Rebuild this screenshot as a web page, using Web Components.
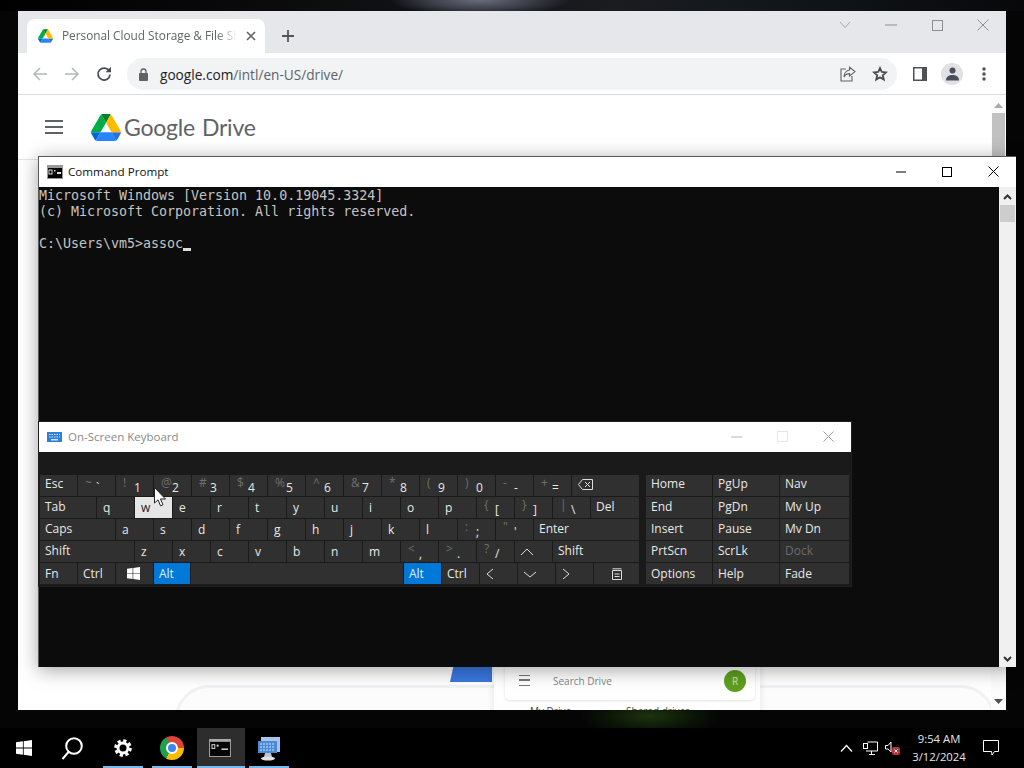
<!DOCTYPE html>
<html>
<head>
<meta charset="utf-8">
<title>Remote desktop</title>
<style>
  html, body { margin: 0; padding: 0; background: #000; overflow: hidden; }
</style>
</head>
<body>
<win-desktop>
  <chrome-window></chrome-window>
  <cmd-window></cmd-window>
  <osk-window></osk-window>
  <mouse-cursor></mouse-cursor>
  <task-bar></task-bar>
</win-desktop>

<script>
const UI_FONT = `"Open Sans", "Noto Sans", sans-serif`;
const DRIVE_LOGO = `
  <svg viewBox="0 0 87.3 78" width="100%" height="100%" style="display:block">
    <path d="m6.6 66.85 3.85 6.65c.8 1.4 1.95 2.5 3.3 3.3l13.75-23.8h-27.5c0 1.55.4 3.1 1.2 4.5z" fill="#0066da"/>
    <path d="m43.65 25-13.75-23.8c-1.35.8-2.5 1.9-3.3 3.3l-25.4 44a9.06 9.06 0 0 0 -1.2 4.5h27.5z" fill="#00ac47"/>
    <path d="m73.55 76.8c1.35-.8 2.5-1.9 3.3-3.3l1.6-2.75 7.65-13.25c.8-1.4 1.2-2.95 1.2-4.5h-27.502l5.852 11.5z" fill="#2a6fdc"/>
    <path d="m43.65 25 13.75-23.8c-1.35-.8-2.9-1.2-4.5-1.2h-18.5c-1.6 0-3.15.45-4.5 1.2z" fill="#00832d"/>
    <path d="m59.8 53h-32.3l-13.75 23.8c1.35.8 2.9 1.2 4.5 1.2h50.8c1.6 0 3.15-.45 4.5-1.2z" fill="#2684fc"/>
    <path d="m73.4 26.5-12.7-22c-.8-1.4-1.95-2.5-3.3-3.3l-13.75 23.8 16.15 28h27.45c0-1.55-.4-3.1-1.2-4.5z" fill="#ffba00"/>
  </svg>`;
const WIN_LOGO = `
  <svg viewBox="0 0 16 16" width="100%" height="100%" fill="#fff" style="display:block">
    <path d="M0 2.3 6.9 1.3V7.6H0zM7.7 1.2 16 0V7.6H7.7zM0 8.4H6.9V14.7L0 13.7zM7.7 8.4H16V16L7.7 14.8z"/>
  </svg>`;

class WinDesktop extends HTMLElement {
  constructor() {
    super();
    this.attachShadow({ mode: 'open' }).innerHTML = `
      <style>
        :host { display: block; position: relative; width: 1024px; height: 768px; overflow: hidden;
          background:
            radial-gradient(ellipse 70px 22px at 650px 716px, #1d3310 0%, #0b1606 60%, transparent 100%),
            radial-gradient(ellipse 90px 16px at 480px 0px, #6a6d7a 0%, #3d3f4a 55%, transparent 100%),
            linear-gradient(90deg, #000 0, #0a0a0c 25%, #1a1c20 60%, #101418 80%, #08080a 100%) 0 0 / 100% 11px no-repeat,
            #050506; }
      </style>
      <slot></slot>`;
  }
}

class ChromeWindow extends HTMLElement {
  constructor() {
    super();
    this.attachShadow({ mode: 'open' }).innerHTML = `
      <style>
        :host { display: flex; flex-direction: column; position: absolute; left: 18px; top: 11px; width: 988px; height: 699px;
          background: #fff; font-family: ${UI_FONT}; }
        .strip { height: 42px; background: #e5e7ea; display: flex; align-items: flex-end; flex: none; }
        .tab { width: 238px; height: 34px; margin-left: 9px; background: #fff; border-radius: 8px 8px 0 0; box-sizing: border-box;
          display: flex; align-items: center; padding: 0 9px 1px 11px; gap: 9px; }
        .fav { width: 15px; height: 14px; flex: none; }
        .tab-title { flex: 1; font-size: 11.8px; color: #5f6368; white-space: nowrap; overflow: hidden; padding-bottom: 1px;
          -webkit-mask-image: linear-gradient(90deg, #000 88%, transparent 100%); mask-image: linear-gradient(90deg, #000 88%, transparent 100%); }
        .newtab { margin: 0 0 9px 15px; width: 16px; height: 16px; }
        .caption { margin-left: auto; align-self: flex-start; display: flex; }
        .caption span { width: 46px; height: 28px; display: flex; align-items: center; justify-content: center; }
        .toolbar { height: 42px; flex: none; display: flex; align-items: center; border-bottom: 1px solid #dadce0; box-sizing: border-box; padding-top: 1px; }
        .nav { width: 32px; height: 20px; display: flex; align-items: center; justify-content: center; flex: none; }
        .nav:first-child { margin-left: 6px; }
        .omni { width: 770px; height: 32px; margin-left: 7px; background: #f1f3f4; border-radius: 16px; display: flex; align-items: center;
          padding: 0 9px 0 11px; box-sizing: border-box; flex: none; }
        .url { margin-left: 11px; font-size: 13.65px; color: #5f6368; }
        .url b { font-weight: 400; color: #202124; }
        .omni-end { margin-left: auto; display: flex; gap: 16px; align-items: center; }
        .tools { display: flex; align-items: center; margin-left: 16px; gap: 13px; }
        .avatar { width: 22px; height: 22px; border-radius: 50%; background: #dfe1e5; display: flex; align-items: center; justify-content: center; margin-left: 1px; }
      </style>
      <div class="strip">
        <div class="tab">
          <span class="fav">${DRIVE_LOGO}</span>
          <span class="tab-title">Personal Cloud Storage &amp; File Sh</span>
          <svg width="10" height="10" viewBox="0 0 10 10" stroke="#5f6368" stroke-width="1.6"><path d="M1 1 9 9M9 1 1 9"/></svg>
        </div>
        <svg class="newtab" viewBox="0 0 16 16" stroke="#555" stroke-width="1.8"><path d="M8 2V14M2 8H14"/></svg>
        <div class="caption">
          <span><svg width="12" height="8" viewBox="0 0 12 8" fill="none" stroke="#a8a8a8"><path d="M1 1 6 6.5 11 1"/></svg></span>
          <span><svg width="12" height="2" viewBox="0 0 12 2" stroke="#8e8e8e"><path d="M0 1H12"/></svg></span>
          <span><svg width="11" height="11" viewBox="0 0 11 11" fill="none" stroke="#8e8e8e"><rect x=".5" y=".5" width="10" height="10"/></svg></span>
          <span><svg width="12" height="12" viewBox="0 0 12 12" stroke="#8e8e8e"><path d="M.5.5 11.5 11.5M11.5.5 .5 11.5"/></svg></span>
        </div>
      </div>
      <div class="toolbar">
        <span class="nav"><svg width="16" height="14" viewBox="0 0 16 14" fill="none" stroke="#b5b7ba" stroke-width="1.6"><path d="M15 7H2M8 1 2 7 8 13"/></svg></span>
        <span class="nav"><svg width="16" height="14" viewBox="0 0 16 14" fill="none" stroke="#b5b7ba" stroke-width="1.6"><path d="M1 7H14M8 1 14 7 8 13"/></svg></span>
        <span class="nav"><svg width="16" height="16" viewBox="0 0 16 16" fill="none"><path d="M13.3 5.2A6 6 0 1 0 14 8.5" stroke="#4a4c50" stroke-width="1.8"/><path d="M9.5 6.3H15V.8z" fill="#4a4c50"/></svg></span>
        <div class="omni">
          <svg width="11" height="13" viewBox="0 0 11 13"><rect x="1" y="5" width="9" height="8" rx="1" fill="#5f6368"/><path d="M3 5V3.5a2.5 2.5 0 0 1 5 0V5" fill="none" stroke="#5f6368" stroke-width="1.3"/></svg>
          <span class="url"><b>google.com</b>/intl/en-US/drive/</span>
          <span class="omni-end">
            <svg width="16" height="16" viewBox="0 0 16 16" fill="none" stroke="#5f6368" stroke-width="1.1"><path d="M6 3H1V15H12V10"/><path d="M9.5 1.2 15 5.6 9.5 10V7.6C7 7.6 5 8.8 4 11 4 7.4 6.2 4.4 9.5 4z"/></svg>
            <svg width="16" height="16" viewBox="0 0 16 16" fill="none" stroke="#4a4c50" stroke-width="1.8"><path d="M8 2 9.8 6 14 6.4 10.8 9.2 11.8 13.6 8 11.3 4.2 13.6 5.2 9.2 2 6.4 6.2 6z"/></svg>
          </span>
        </div>
        <div class="tools">
          <svg width="14" height="14" viewBox="0 0 14 14"><rect width="14" height="14" fill="#4f5155"/><rect x="1.5" y="1.5" width="7.5" height="11" fill="#fff"/></svg>
          <span class="avatar"><svg width="13" height="14" viewBox="0 0 13 14" fill="#4a4f57"><circle cx="6.5" cy="3.5" r="3"/><path d="M0 13.5C0 9.5 3 8 6.5 8S13 9.5 13 13.5z"/></svg></span>
          <svg width="4" height="14" viewBox="0 0 4 14" fill="#4f5155" style="margin-left:6px"><circle cx="2" cy="2" r="1.7"/><circle cx="2" cy="7" r="1.7"/><circle cx="2" cy="12" r="1.7"/></svg>
        </div>
      </div>
      <drive-page></drive-page>`;
  }
}

class DrivePage extends HTMLElement {
  constructor() {
    super();
    this.attachShadow({ mode: 'open' }).innerHTML = `
      <style>
        :host { display: flex; flex: 1; min-height: 0; position: relative; overflow: hidden; background: #fff; font-family: ${UI_FONT}; }
        .main { flex: 1; position: relative; overflow: hidden; }
        header { height: 64px; border-bottom: 1px solid #e4e4e4; display: flex; align-items: center; padding-left: 27px; box-sizing: content-box; }
        .burger { width: 18px; height: 14px; border-top: 2px solid #5f6368; border-bottom: 2px solid #5f6368; box-sizing: border-box; position: relative; }
        .burger::after { content: ""; position: absolute; left: 0; right: 0; top: 4px; height: 2px; background: #5f6368; }
        .logo { width: 30px; height: 27px; margin-left: 28px; }
        .word { margin-left: 3px; font-size: 23px; color: #5f6368; font-family: Lato, ${UI_FONT}; letter-spacing: -.22px; }
        .word + .word { margin-left: 7px; }
        .scroll { width: 15px; flex: none; background: #fcfcfc; display: flex; flex-direction: column; align-items: center; }
        .up { margin-top: 8px; }
        .thumb { width: 13px; height: 60px; margin-top: 5px; background: #c1c1c1; }
        .down { margin-top: auto; margin-bottom: 6px; }
        .laptop { position: absolute; left: 157px; top: 590px; width: 820px; height: 60px; border: 3px solid #f1f2f3; border-radius: 34px 34px 0 0; box-sizing: border-box; background: #fcfcfc; }
        .phone { position: absolute; left: 476px; top: 560px; width: 266px; height: 70px; background: #fff; box-shadow: 0 0 8px rgba(0,0,0,.1); }
        .blue { position: absolute; left: 432px; top: 560px; width: 42px; height: 27px; background: #3a78e0; clip-path: polygon(14% 0, 100% 0, 100% 100%, 0 100%); }
        .search { position: absolute; left: 487px; top: 560px; width: 250px; height: 45px; box-sizing: border-box; background: #fff; border-radius: 0 0 5px 5px;
          box-shadow: 0 1px 3px rgba(0,0,0,.12); display: flex; align-items: center; padding: 6px 9px 0 14px; font-size: 10px; color: #80868b; }
        .s-burger { width: 11px; height: 9px; border-top: 1.5px solid #777; border-bottom: 1.5px solid #777; margin-right: 23px; position: relative; }
        .s-burger::after { content: ""; position: absolute; left: 0; right: 0; top: 3px; height: 1.5px; background: #777; }
        .r { margin-left: auto; width: 22px; height: 22px; border-radius: 50%; background: #5f9e1f; color: #cfe6b0; display: flex; align-items: center; justify-content: center; font-size: 10px; }
        .tabs { position: absolute; left: 512px; top: 609px; font-size: 10px; color: #444; white-space: nowrap; display: flex; gap: 55px; }
      </style>
      <div class="main">
        <header>
          <span class="burger"></span>
          <span class="logo">${DRIVE_LOGO}</span>
          <span class="word">Google</span><span class="word">Drive</span>
        </header>
        <div class="laptop"></div>
        <div class="blue"></div>
        <div class="phone"></div>
        <div class="search"><span class="s-burger"></span>Search Drive<span class="r">R</span></div>
        <div class="tabs"><span>My Drive</span><span>Shared drives</span></div>
      </div>
      <div class="scroll">
        <svg class="up" width="9" height="5" viewBox="0 0 9 5" fill="#a9a9a9"><path d="M4.5 0 9 5H0z"/></svg>
        <div class="thumb"></div>
        <svg class="down" width="9" height="5" viewBox="0 0 9 5" fill="#505050"><path d="M4.5 5 9 0H0z"/></svg>
      </div>`;
  }
}

class CmdWindow extends HTMLElement {
  constructor() {
    super();
    this.attachShadow({ mode: 'open' }).innerHTML = `
      <style>
        :host { display: flex; flex-direction: column; position: absolute; left: 38px; top: 156px; width: 978px; height: 511px;
          box-sizing: border-box; border: 1px solid #5a5a5a; border-bottom: 0; border-right: 0; background: #fff;
          box-shadow: 0 3px 18px rgba(0,0,0,.36); font-family: ${UI_FONT}; }
        .title { height: 30px; flex: none; display: flex; align-items: center; padding: 0 0 1px 8px; box-sizing: border-box; font-size: 11.65px; color: #111; background: #fff; }
        .title span { margin-left: 5px; }
        .caption { margin-left: auto; display: flex; }
        .caption i { width: 46px; height: 29px; display: flex; align-items: center; justify-content: center; }
        .body { flex: 1; display: flex; min-height: 0; }
        .console { flex: 1; background: #0c0c0c; color: #c4c4c4; font: 13.33px/16px "DejaVu Sans Mono", "Liberation Mono", monospace; white-space: pre; padding-top: 1px; letter-spacing: -.02px; }
        .caret { display: inline-block; width: 8px; height: 3px; background: #ddd; vertical-align: -3px; }
        .scroll { width: 17px; flex: none; background: #f0f0f0; display: flex; flex-direction: column; align-items: center; }
        .up { margin-top: 7px; }
        .thumb { width: 15px; height: 17px; margin-top: 5px; background: #cdcdcd; }
        .down { margin-top: auto; margin-bottom: 5px; }
      </style>
      <div class="title">
        <svg width="16" height="14" viewBox="0 0 16 14"><rect width="16" height="14" fill="#999"/><rect x="1" y="3" width="14" height="10" fill="#000"/><rect x="2" y="5" width="3" height="4" fill="none" stroke="#ddd"/><rect x="7" y="5" width="1.5" height="1.5" fill="#ddd"/><rect x="10" y="7" width="4" height="2" fill="#ddd"/></svg>
        <span>Command Prompt</span>
        <div class="caption">
          <i><svg width="10" height="2" viewBox="0 0 10 2" stroke="#000"><path d="M0 1H10"/></svg></i>
          <i><svg width="10" height="10" viewBox="0 0 10 10" fill="none" stroke="#000"><rect x=".5" y=".5" width="9" height="9"/></svg></i>
          <i><svg width="11" height="11" viewBox="0 0 11 11" stroke="#000"><path d="M.5.5 10.5 10.5M10.5.5 .5 10.5"/></svg></i>
        </div>
      </div>
      <div class="body">
        <div class="console">Microsoft Windows [Version 10.0.19045.3324]
(c) Microsoft Corporation. All rights reserved.

C:\\Users\\vm5&gt;assoc<span class="caret"></span></div>
        <div class="scroll">
          <svg class="up" width="9" height="6" viewBox="0 0 9 6" fill="none" stroke="#333" stroke-width="2"><path d="M1 5 4.5 1.5 8 5"/></svg>
          <div class="thumb"></div>
          <svg class="down" width="9" height="6" viewBox="0 0 9 6" fill="none" stroke="#333" stroke-width="2"><path d="M1 1 4.5 4.5 8 1"/></svg>
        </div>
      </div>`;
  }
}

class OskKey extends HTMLElement {
  constructor() {
    super();
    this.attachShadow({ mode: 'open' }).innerHTML = `
      <style>
        :host { display: flex; align-items: center; box-sizing: border-box; height: 21px; margin-right: 1px; padding-left: 5px;
          background: #303030; color: #e8e8e8; font-size: 12px; position: relative; flex: none; white-space: nowrap; }
        :host([pad]) { padding-left: 6px; }
        :host([hot]) { background: #e6e6e6; color: #222; }
        :host([on]) { background: #0078d7; color: #dff0ff; }
        :host([off]) { color: #6a6a6a; }
        .top { position: absolute; left: 7px; top: -1px; color: #6f6f6f; font-size: 12px; }
        .low { position: absolute; left: 18px; top: 4px; }
      </style>
      <span class="top"></span><span class="low"></span><slot></slot>`;
  }
  connectedCallback() {
    this.shadowRoot.querySelector('.top').textContent = this.getAttribute('top') || '';
    this.shadowRoot.querySelector('.low').textContent = this.getAttribute('low') || '';
    this.style.width = (this.getAttribute('w') - 1) + 'px';
  }
}

// [width, label, shifted, flag] for the main block
const chev = (d) => `<svg width="14" height="12" viewBox="0 0 14 12" fill="none" stroke="#ddd" stroke-width="1"><path d="${d}"/></svg>`;
const KEY_ROWS = [
  [[38,'Esc'],[38,'`','~'],[38,'1','!'],[38,'2','@'],[38,'3','#'],[38,'4','$'],[38,'5','%'],[38,'6','^'],[38,'7','&'],[38,'8','*'],[38,'9','('],[38,'0',')'],[38,'-','-'],[38,'=','+'],
    [68,`<svg width="15" height="11" viewBox="0 0 15 11" fill="none" stroke="#ddd" style="margin:-3px 0 0 1px"><path d="M4.5.5H14.5V10.5H4.5L.5 5.500zM7 3l5 5M12 3 7 8"/></svg>`]],
  [[57,'Tab'],[38,'q',0,'pad'],[38,'w',0,'pad hot'],[38,'e',0,'pad'],[38,'r',0,'pad'],[38,'t',0,'pad'],[38,'y',0,'pad'],[38,'u',0,'pad'],[38,'i',0,'pad'],[38,'o',0,'pad'],[38,'p',0,'pad'],[38,'[','{'],[38,']','}'],[38,'\\','|'],[49,'Del']],
  [[76,'Caps'],[38,'a',0,'pad'],[38,'s',0,'pad'],[38,'d',0,'pad'],[38,'f',0,'pad'],[38,'g',0,'pad'],[38,'h',0,'pad'],[38,'j',0,'pad'],[38,'k',0,'pad'],[38,'l',0,'pad'],[38,';',':'],[38,"'",'"'],[106,'Enter']],
  [[95,'Shift'],[38,'z',0,'pad'],[38,'x',0,'pad'],[38,'c',0,'pad'],[38,'v',0,'pad'],[38,'b',0,'pad'],[38,'n',0,'pad'],[38,'m',0,'pad'],[38,',','<'],[38,'.','>'],[38,'/','?'],[38,chev('M1 9 7 3 13 9')],[87,'Shift']],
  [[38,'Fn'],[38,'Ctrl'],[38,`<span style="display:block;width:13px;height:13px;margin-left:6px">${WIN_LOGO}</span>`],[37,'Alt',0,'on'],[213,''],[38,'Alt',0,'on'],[38,'Ctrl'],
    [38,chev('M8 1 2 6 8 11')],[38,chev('M1 4 7 9 13 4')],[38,chev('M2 1 8 6 2 11')],
    [46,`<svg width="10" height="12" viewBox="0 0 10 12" fill="none" stroke="#ddd" style="margin-left:13px"><path d="M.5 2.500H9.500V11.500H.5zM.5.800H9.500M2.500 6H7.500M2.500 8.500H7.500"/></svg>`]]
];
const NAV_ROWS = [
  ['Home','PgUp','Nav'], ['End','PgDn','Mv Up'], ['Insert','Pause','Mv Dn'], ['PrtScn','ScrLk','Dock'], ['Options','Help','Fade']
];
// word labels sit a little above the middle of the key
const liftFor = (rowIndex) => (rowIndex === 0 ? '4px' : rowIndex < 4 ? '2px' : '0');

class OskWindow extends HTMLElement {
  constructor() {
    super();
    this.attachShadow({ mode: 'open' }).innerHTML = `
      <style>
        :host { display: flex; flex-direction: column; position: absolute; left: 38px; top: 421px; width: 814px; height: 166px; box-sizing: border-box;
          border: 1px solid #202020; background: #1a1a1a; font-family: ${UI_FONT}; }
        .title { height: 30px; flex: none; box-sizing: border-box; padding: 0 0 1px 8px; background: #fff; display: flex; align-items: center; color: #8a8a8a; font-size: 11.500px; }
        .title span { margin-left: 6px; }
        .caption { margin-left: auto; display: flex; margin-right: 0; }
        .caption i { width: 46px; height: 29px; display: flex; align-items: center; justify-content: center; }
        .keys { display: flex; padding: 23px 0 0 1px; gap: 6px; }
        .block { display: flex; flex-direction: column; gap: 1px; }
        .row { display: flex; }
      </style>
      <div class="title">
        <svg width="15" height="10" viewBox="0 0 15 10"><rect width="15" height="10" fill="#2f7fd6"/><path d="M2 2.500H13M2 5H13" stroke="#cfe4fa" stroke-dasharray="1.500 1"/><rect x="4" y="7" width="7" height="1.500" fill="#cfe4fa"/></svg>
        <span>On-Screen Keyboard</span>
        <div class="caption">
          <i><svg width="11" height="2" viewBox="0 0 11 2" stroke="#b5b5b5"><path d="M0 1H11"/></svg></i>
          <i><svg width="11" height="11" viewBox="0 0 11 11" fill="none" stroke="#e6e6e6"><rect x=".5" y=".5" width="10" height="10"/></svg></i>
          <i><svg width="11" height="11" viewBox="0 0 11 11" stroke="#a0a0a0"><path d="M.5.5 10.500 10.500M10.500.5 .5 10.500"/></svg></i>
        </div>
      </div>
      <div class="keys">
        <div class="block" id="main"></div>
        <div class="block" id="nav"></div>
      </div>`;
    const main = this.shadowRoot.getElementById('main');
    KEY_ROWS.forEach((keys, r) => {
      const row = document.createElement('div');
      row.className = 'row';
      keys.forEach(([w, label, top, flags]) => {
        const key = document.createElement('osk-key');
        key.setAttribute('w', w);
        if (top) {
          key.setAttribute('top', top);
          key.setAttribute('low', label);
        } else {
          key.innerHTML = label;
          if (/^[A-Z]/.test(label)) key.style.paddingBottom = liftFor(r);
        }
        (flags || '').split(' ').filter(Boolean).forEach((f) => key.setAttribute(f, ''));
        row.appendChild(key);
      });
      main.appendChild(row);
    });
    const nav = this.shadowRoot.getElementById('nav');
    NAV_ROWS.forEach((labels, r) => {
      const row = document.createElement('div');
      row.className = 'row';
      labels.forEach((label, i) => {
        const key = document.createElement('osk-key');
        key.setAttribute('w', i === 2 ? 70 : 67);
        if (label === 'Dock') key.setAttribute('off', '');
        key.style.paddingBottom = liftFor(r);
        key.textContent = label;
        row.appendChild(key);
      });
      nav.appendChild(row);
    });
  }
}

class MouseCursor extends HTMLElement {
  constructor() {
    super();
    this.attachShadow({ mode: 'open' }).innerHTML = `
      <style>:host { display: block; position: absolute; left: 154px; top: 487px; width: 13px; height: 20px; }</style>
      <svg width="13" height="20" viewBox="0 0 13 20"><path d="M.5.5V16L4 12.800 6.500 18.800 9 17.800 6.500 12H11.500z" fill="#fff" stroke="#222"/></svg>`;
  }
}

class TaskItem extends HTMLElement {
  constructor() {
    super();
    this.attachShadow({ mode: 'open' }).innerHTML = `
      <style>
        :host { display: flex; align-items: center; justify-content: center; width: 48px; height: 40px; position: relative; flex: none; }
        :host([active]) { background: #2d2d2d; }
        :host([running])::after, :host([active])::after { content: ""; position: absolute; bottom: 0; left: 4px; right: 4px; height: 2px; background: #76b9ed; }
        :host([active])::after { left: 0; right: 0; }
      </style>
      <slot></slot>`;
  }
}

class TaskBar extends HTMLElement {
  constructor() {
    super();
    this.attachShadow({ mode: 'open' }).innerHTML = `
      <style>
        :host { display: flex; align-items: center; position: absolute; left: 0; bottom: 0; width: 1024px; height: 40px; background: #000; font-family: ${UI_FONT}; color: #e4e4e4; }
        .tray { margin-left: auto; display: flex; align-items: center; height: 40px; }
        .tray svg { flex: none; }
        .clock { width: 74px; text-align: center; font-size: 11.300px; line-height: 18px; margin-left: 2px; }
        .note { margin: 0 25px 0 7px; }
        .chrome-logo { width: 24px; height: 24px; border-radius: 50%; display: flex; align-items: center; justify-content: center;
          background: conic-gradient(from 0deg, #dd4437 0 90deg, #fbbc05 90deg 210deg, #21a04b 210deg 330deg, #dd4437 330deg); }
        .chrome-logo span { width: 8px; height: 8px; background: #3d85f0; border-radius: 50%; border: 2.500px solid #fff; }
      </style>
      <task-item><span style="display:block;width:16px;height:16px">${WIN_LOGO}</span></task-item>
      <task-item><svg width="22" height="23" viewBox="0 0 22 23" fill="none" stroke="#fff" stroke-width="2"><circle cx="13" cy="9" r="7.800"/><path d="M7.500 15 1.500 22"/></svg></task-item>
      <task-item running style="margin-left:3px"><svg width="18" height="18" viewBox="0 0 18 18" fill="none" stroke="#fff"><circle cx="9" cy="9" r="5" stroke-width="3"/><circle cx="9" cy="9" r="7.300" stroke-width="3" stroke-dasharray="3.200 2.530"/></svg></task-item>
      <task-item running style="margin-left:1px"><span class="chrome-logo"><span></span></span></task-item>
      <task-item active style="margin-left:1px"><svg width="22" height="18" viewBox="0 0 23 19" style="margin-right:2px"><rect width="23" height="19" fill="#a8a8a8"/><rect y="3" x="1" width="21" height="15" fill="#050505"/><rect x="3" y="6" width="3" height="4" fill="none" stroke="#ddd"/><rect x="8" y="6" width="2" height="2" fill="#ddd"/><rect x="13" y="10" width="7" height="1.500" fill="#ddd"/></svg></task-item>
      <task-item running><svg width="24" height="25" viewBox="0 0 24 25"><rect x="4" y="1" width="19" height="15" fill="#a9c6e8"/><rect x="1" y="5" width="19" height="12" fill="#4b8ad6"/><path d="M3 8H18M3 11H18M3 14H18" stroke="#cfe4ff" stroke-dasharray="2 1"/><path d="M8 17H14L15 21H7z" fill="#c4c4c4"/><ellipse cx="11" cy="22.500" rx="7" ry="2" fill="#e0e0e0"/></svg></task-item>
      <div class="tray">
        <svg width="13" height="8" viewBox="0 0 13 8" fill="none" stroke="#fff" stroke-width="1.200" style="margin-right:10px"><path d="M1 7.500 6.500 1.500 12 7.500"/></svg>
        <svg width="15" height="14" viewBox="0 0 15 14" fill="none" stroke="#fff" style="margin-right:7px"><path d="M4.500 1H14.500V10H3M6 13.500H12M8.500 10V13.500"/><rect x=".5" y="2.500" width="4" height="5"/></svg>
        <svg width="15" height="14" viewBox="0 0 15 14"><path d="M.5 4.500H3L6 1V11L3 8H.5z" fill="none" stroke="#fff"/><rect x="7" y="6" width="8" height="8" rx="2" fill="#b8343c"/><path d="M9.500 8.500 12.500 11.500M12.500 8.500 9.500 11.500" stroke="#fff"/></svg>
        <div class="clock">9:54 AM<br>3/12/2024</div>
        <svg class="note" width="16" height="16" viewBox="0 0 16 16" fill="none" stroke="#fff"><path d="M.5.5H15.500V11.500H11.500L9 15 8.500 11.500H.5z"/></svg>
      </div>`;
  }
}

customElements.define('win-desktop', WinDesktop);
customElements.define('drive-page', DrivePage);
customElements.define('chrome-window', ChromeWindow);
customElements.define('cmd-window', CmdWindow);
customElements.define('osk-key', OskKey);
customElements.define('osk-window', OskWindow);
customElements.define('mouse-cursor', MouseCursor);
customElements.define('task-item', TaskItem);
customElements.define('task-bar', TaskBar);
</script>
</body>
</html>
